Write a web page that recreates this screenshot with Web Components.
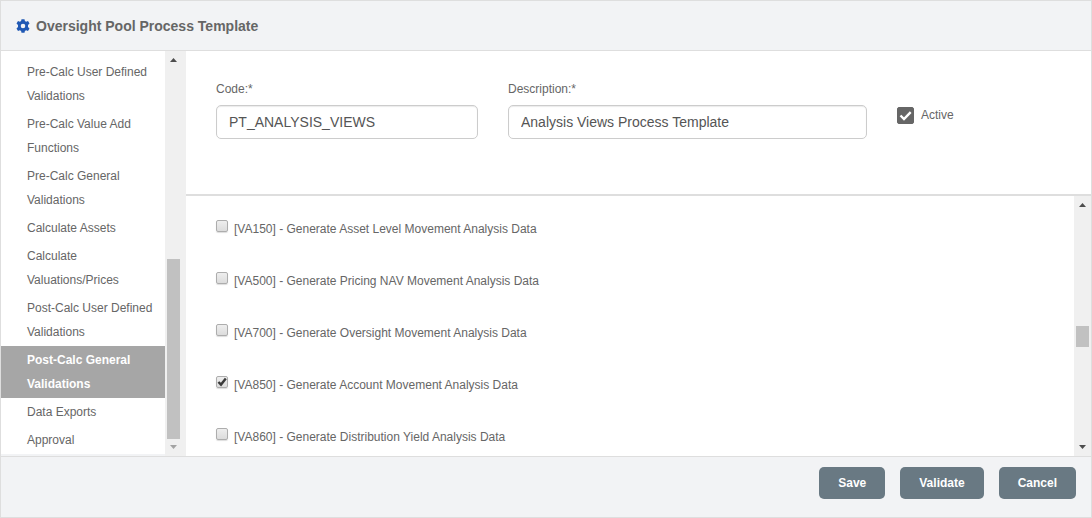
<!DOCTYPE html>
<html lang="en">
<head>
<meta charset="utf-8">
<meta name="viewport" content="width=device-width, initial-scale=1">
<title>Oversight Pool Process Template</title>
<style>
  body { margin: 0; font: 12px/24px "Liberation Sans", Arial, sans-serif; color: #666; background: #fff; }
</style>
</head>
<body>
<template-dialog>
  <dialog-title slot="header">Oversight Pool Process Template</dialog-title>
  <step-list slot="steps">
    <step-item>Pre-Calc User Defined Validations</step-item>
    <step-item>Pre-Calc Value Add Functions</step-item>
    <step-item>Pre-Calc General Validations</step-item>
    <step-item>Calculate Assets</step-item>
    <step-item>Calculate Valuations/Prices</step-item>
    <step-item>Post-Calc User Defined Validations</step-item>
    <step-item selected>Post-Calc General Validations</step-item>
    <step-item>Data Exports</step-item>
    <step-item>Approval</step-item>
  </step-list>
  <template-form slot="form">
    <text-field label="Code:*" value="PT_ANALYSIS_VIEWS"></text-field>
    <text-field label="Description:*" value="Analysis Views Process Template"></text-field>
    <active-toggle checked>Active</active-toggle>
  </template-form>
  <rule-list slot="rules">
    <rule-option>[VA150] - Generate Asset Level Movement Analysis Data</rule-option>
    <rule-option>[VA500] - Generate Pricing NAV Movement Analysis Data</rule-option>
    <rule-option>[VA700] - Generate Oversight Movement Analysis Data</rule-option>
    <rule-option checked>[VA850] - Generate Account Movement Analysis Data</rule-option>
    <rule-option>[VA860] - Generate Distribution Yield Analysis Data</rule-option>
  </rule-list>
  <action-button slot="actions">Save</action-button>
  <action-button slot="actions">Validate</action-button>
  <action-button slot="actions">Cancel</action-button>
</template-dialog>

<script>
const define = (name, markup, setup) => {
  const template = document.createElement('template');
  template.innerHTML = markup;
  customElements.define(name, class extends HTMLElement {
    constructor() {
      super();
      this.attachShadow({ mode: 'open' }).append(template.content.cloneNode(true));
    }
    connectedCallback() { if (setup) setup(this, this.shadowRoot); }
  });
};

define('template-dialog', `
  <style>
    :host { display: flex; flex-direction: column; box-sizing: border-box; height: 100vh; border: 1px solid #dedede; background: #f2f3f5; }
    header { border-bottom: 1px solid #dedede; }
    .body { flex: 1; min-height: 0; display: grid; grid-template-columns: 185px minmax(0, 1fr); grid-template-rows: minmax(0, 1fr); }
    nav { min-height: 0; display: grid; grid-template-rows: minmax(0, 1fr); }
    main { display: flex; flex-direction: column; min-height: 0; background: #fff; }
    footer { display: flex; justify-content: flex-end; gap: 15px; padding: 10px 15px 18px; border-top: 1px solid #dedede; }
  </style>
  <header><slot name="header"></slot></header>
  <div class="body">
    <nav aria-label="Steps"><slot name="steps"></slot></nav>
    <main><slot name="form"></slot><slot name="rules"></slot></main>
  </div>
  <footer><slot name="actions"></slot></footer>`);

define('dialog-title', `
  <style>
    :host { display: flex; align-items: center; gap: 6px; height: 49px; padding: 0 15px; }
    h1 { margin: 0; font-size: 14px; line-height: 24px; font-weight: bold; color: #666; }
    svg { flex: none; width: 14px; height: 14px; }
  </style>
  <svg viewBox="0 0 14 14" aria-hidden="true">
    <path fill="#2159b4" fill-rule="evenodd" d="M5.500.2h3l.4 1.900 1.200.7 1.900-.7 1.500 2.500-1.500 1.400v2l1.500 1.400-1.500 2.500-1.900-.7-1.200.7-.4 1.900h-3l-.4-1.900-1.200-.7-1.900.7L.5 9.400 2 8V6L.5 4.600 2 2.100l1.900.7 1.200-.7ZM7 4.700a2.300 2.300 0 1 0 0 4.600 2.300 2.300 0 0 0 0-4.600Z"/>
  </svg>
  <h1><slot></slot></h1>`);

define('scroll-rail', `
  <style>
    :host { display: flex; flex-direction: column; width: 17px; background: #f0f0f0; }
    svg { flex: none; width: 17px; height: 17px; fill: #4d4d4d; }
    .before { flex: var(--before) 0 0px; }
    .thumb { flex: var(--thumb) 0 0px; margin: 0 2px; background: #c1c1c1; }
    .after { flex: var(--after) 0 0px; }
    :host([at-end]) .down { fill: #a3a3a3; }
  </style>
  <svg class="up" viewBox="0 0 17 17" aria-hidden="true"><path d="M5 11 8.5 7 12 11Z"/></svg>
  <div class="before"></div><div class="thumb"></div><div class="after"></div>
  <svg class="down" viewBox="0 0 17 17" aria-hidden="true"><path d="M5 6h7L8.5 10Z"/></svg>`);

define('step-list', `
  <style>
    :host { display: flex; min-height: 0; padding-right: 4px; background: #f0f0f0; }
    .view { flex: 1; min-width: 0; overflow: hidden; background: #f2f3f5; }
    .items { padding-top: 7px; background: #fff; }
    scroll-rail { --before: 192; --thumb: 180; --after: 0; }
  </style>
  <div class="view"><div class="items"><slot></slot></div></div>
  <scroll-rail at-end></scroll-rail>`);

define('step-item', `
  <style>
    :host { display: block; }
    a { display: block; padding: 2px 10px 2px 26px; color: inherit; text-decoration: none; }
    :host([selected]) a { background: #a6a6a6; color: #fff; font-weight: bold; }
  </style>
  <a href="#"><slot></slot></a>`, (host, root) => {
    if (host.hasAttribute('selected')) root.querySelector('a').setAttribute('aria-current', 'step');
  });

define('template-form', `
  <style>
    :host { display: grid; grid-template-columns: 262fr 359fr 164fr; gap: 30px; padding: 26px 30px 55px; border-bottom: 2px solid #dedede; }
  </style>
  <slot></slot>`);

define('text-field', `
  <style>
    :host { display: flex; flex-direction: column; gap: 4px; min-width: 0; }
    input { box-sizing: border-box; width: 100%; height: 34px; margin: 0; padding: 0 12px; border: 1px solid #ccc; border-radius: 5px; background: #fff; box-shadow: inset 0 1px 1px #ececec; font: inherit; font-size: 14px; color: #555; outline: none; }
  </style>
  <label for="field"></label>
  <input id="field" type="text">`, (host, root) => {
    root.querySelector('label').textContent = host.getAttribute('label');
    root.querySelector('input').value = host.getAttribute('value');
  });

define('active-toggle', `
  <style>
    :host { display: flex; align-items: flex-start; padding-top: 26px; }
    label { display: flex; align-items: center; gap: 7px; }
    .box { display: grid; }
    .box > * { grid-area: 1 / 1; width: 17px; height: 17px; margin: 0; }
    input { appearance: none; box-sizing: border-box; border: 1px solid #666; border-radius: 2px; background: #fff; }
    input:checked { background: #666; }
    svg { pointer-events: none; fill: none; stroke: #fff; stroke-width: 2.4; }
  </style>
  <label for="active"><span class="box"><input id="active" type="checkbox"><svg viewBox="0 0 17 17" aria-hidden="true"><path d="M3.5 8.5 7 12 13.7 5.2"/></svg></span><slot></slot></label>`,
  (host, root) => { root.querySelector('input').checked = host.hasAttribute('checked'); });

define('rule-list', `
  <style>
    :host { flex: 1; display: flex; min-height: 0; }
    .view { flex: 1; min-width: 0; overflow: hidden; padding: 7px 30px 0; }
    scroll-rail { --before: 113; --thumb: 21; --after: 92; }
  </style>
  <div class="view"><slot></slot></div>
  <scroll-rail></scroll-rail>`);

define('rule-option', `
  <style>
    :host { display: block; padding: 14px 0; }
    label { display: flex; gap: 6px; }
    .box { display: grid; align-self: flex-start; padding-top: 3px; }
    .box > * { grid-area: 1 / 1; width: 12px; height: 12px; margin: 0; }
    input { appearance: none; box-sizing: border-box; border: 1px solid #adadad; border-radius: 2px; background: linear-gradient(#eee, #dcdcdc); box-shadow: 0 1px 1px #ddd; }
    svg { visibility: hidden; pointer-events: none; fill: none; stroke: #3a3a3a; stroke-width: 2.4; }
    input:checked + svg { visibility: visible; }
  </style>
  <label for="rule"><span class="box"><input id="rule" type="checkbox"><svg viewBox="0 0 12 12" aria-hidden="true"><path d="M2.4 6 5 8.6 9.8 2.6"/></svg></span><slot></slot></label>`,
  (host, root) => { root.querySelector('input').checked = host.hasAttribute('checked'); });

define('action-button', `
  <style>
    :host { display: block; }
    button { display: block; height: 32px; margin: 0; padding: 0 19px; border: 0; border-radius: 5px; background: #697983; color: #fff; font: inherit; font-weight: bold; }
  </style>
  <button type="button"><slot></slot></button>`);
</script>
</body>
</html>
